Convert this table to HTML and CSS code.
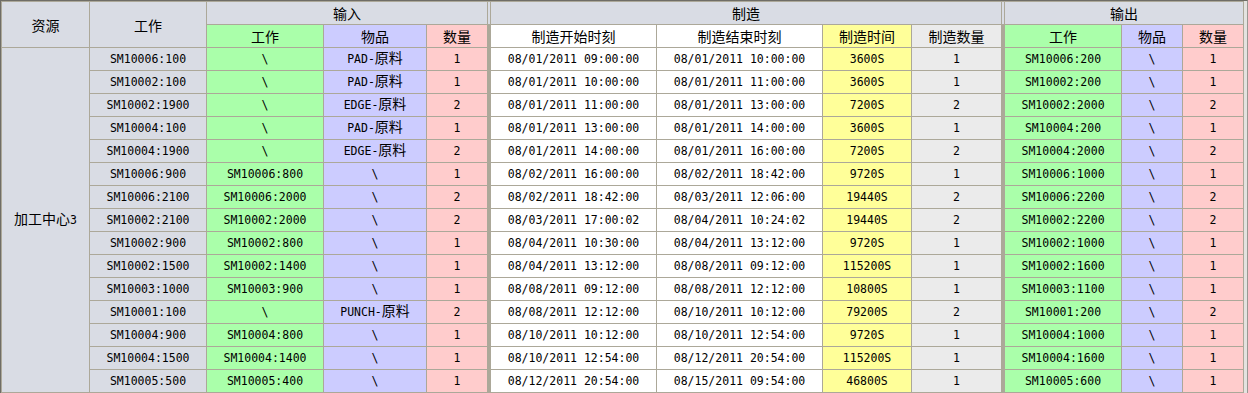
FILE: index.html
```html
<!DOCTYPE html>
<html lang="zh">
<head>
<meta charset="utf-8">
<title>制造计划</title>
<link rel="stylesheet" href="styles.css">
</head>
<body>
<div class="frame">
<table class="grid">
<colgroup>
<col class="w88"><col class="w117"><col class="w117"><col class="w103"><col class="w61"><col class="w3">
<col class="w166"><col class="w166"><col class="w89"><col class="w90"><col class="w3">
<col class="w117"><col class="w61"><col class="w61">
</colgroup>
<tbody>
<tr>
<th rowspan="2">资源</th><th rowspan="2">工作</th><th colspan="3">输入</th><th class="sp-top"></th><th colspan="4">制造</th><th class="sp-top"></th><th colspan="3">输出</th>
</tr>
<tr>
<th class="g">工作</th><th class="p">物品</th><th class="r">数量</th><th class="sp" rowspan="16"></th><th class="w">制造开始时刻</th><th class="w">制造结束时刻</th><th class="y">制造时间</th><th class="l">制造数量</th><th class="sp" rowspan="16"></th><th class="g">工作</th><th class="p">物品</th><th class="r">数量</th>
</tr>
<tr><td class="res" rowspan="15"><span class="c">加工中心</span>3</td><td class="hd">SM10006:100</td><td class="g">\</td><td class="p">PAD-<span class="c">原料</span></td><td class="r">1</td><td class="w">08/01/2011 09:00:00</td><td class="w">08/01/2011 10:00:00</td><td class="y">3600S</td><td class="l">1</td><td class="g">SM10006:200</td><td class="p">\</td><td class="r">1</td></tr>
<tr><td class="hd">SM10002:100</td><td class="g">\</td><td class="p">PAD-<span class="c">原料</span></td><td class="r">1</td><td class="w">08/01/2011 10:00:00</td><td class="w">08/01/2011 11:00:00</td><td class="y">3600S</td><td class="l">1</td><td class="g">SM10002:200</td><td class="p">\</td><td class="r">1</td></tr>
<tr><td class="hd">SM10002:1900</td><td class="g">\</td><td class="p">EDGE-<span class="c">原料</span></td><td class="r">2</td><td class="w">08/01/2011 11:00:00</td><td class="w">08/01/2011 13:00:00</td><td class="y">7200S</td><td class="l">2</td><td class="g">SM10002:2000</td><td class="p">\</td><td class="r">2</td></tr>
<tr><td class="hd">SM10004:100</td><td class="g">\</td><td class="p">PAD-<span class="c">原料</span></td><td class="r">1</td><td class="w">08/01/2011 13:00:00</td><td class="w">08/01/2011 14:00:00</td><td class="y">3600S</td><td class="l">1</td><td class="g">SM10004:200</td><td class="p">\</td><td class="r">1</td></tr>
<tr><td class="hd">SM10004:1900</td><td class="g">\</td><td class="p">EDGE-<span class="c">原料</span></td><td class="r">2</td><td class="w">08/01/2011 14:00:00</td><td class="w">08/01/2011 16:00:00</td><td class="y">7200S</td><td class="l">2</td><td class="g">SM10004:2000</td><td class="p">\</td><td class="r">2</td></tr>
<tr><td class="hd">SM10006:900</td><td class="g">SM10006:800</td><td class="p">\</td><td class="r">1</td><td class="w">08/02/2011 16:00:00</td><td class="w">08/02/2011 18:42:00</td><td class="y">9720S</td><td class="l">1</td><td class="g">SM10006:1000</td><td class="p">\</td><td class="r">1</td></tr>
<tr><td class="hd">SM10006:2100</td><td class="g">SM10006:2000</td><td class="p">\</td><td class="r">2</td><td class="w">08/02/2011 18:42:00</td><td class="w">08/03/2011 12:06:00</td><td class="y">19440S</td><td class="l">2</td><td class="g">SM10006:2200</td><td class="p">\</td><td class="r">2</td></tr>
<tr><td class="hd">SM10002:2100</td><td class="g">SM10002:2000</td><td class="p">\</td><td class="r">2</td><td class="w">08/03/2011 17:00:02</td><td class="w">08/04/2011 10:24:02</td><td class="y">19440S</td><td class="l">2</td><td class="g">SM10002:2200</td><td class="p">\</td><td class="r">2</td></tr>
<tr><td class="hd">SM10002:900</td><td class="g">SM10002:800</td><td class="p">\</td><td class="r">1</td><td class="w">08/04/2011 10:30:00</td><td class="w">08/04/2011 13:12:00</td><td class="y">9720S</td><td class="l">1</td><td class="g">SM10002:1000</td><td class="p">\</td><td class="r">1</td></tr>
<tr><td class="hd">SM10002:1500</td><td class="g">SM10002:1400</td><td class="p">\</td><td class="r">1</td><td class="w">08/04/2011 13:12:00</td><td class="w">08/08/2011 09:12:00</td><td class="y">115200S</td><td class="l">1</td><td class="g">SM10002:1600</td><td class="p">\</td><td class="r">1</td></tr>
<tr><td class="hd">SM10003:1000</td><td class="g">SM10003:900</td><td class="p">\</td><td class="r">1</td><td class="w">08/08/2011 09:12:00</td><td class="w">08/08/2011 12:12:00</td><td class="y">10800S</td><td class="l">1</td><td class="g">SM10003:1100</td><td class="p">\</td><td class="r">1</td></tr>
<tr><td class="hd">SM10001:100</td><td class="g">\</td><td class="p">PUNCH-<span class="c">原料</span></td><td class="r">2</td><td class="w">08/08/2011 12:12:00</td><td class="w">08/10/2011 10:12:00</td><td class="y">79200S</td><td class="l">2</td><td class="g">SM10001:200</td><td class="p">\</td><td class="r">2</td></tr>
<tr><td class="hd">SM10004:900</td><td class="g">SM10004:800</td><td class="p">\</td><td class="r">1</td><td class="w">08/10/2011 10:12:00</td><td class="w">08/10/2011 12:54:00</td><td class="y">9720S</td><td class="l">1</td><td class="g">SM10004:1000</td><td class="p">\</td><td class="r">1</td></tr>
<tr><td class="hd">SM10004:1500</td><td class="g">SM10004:1400</td><td class="p">\</td><td class="r">1</td><td class="w">08/10/2011 12:54:00</td><td class="w">08/12/2011 20:54:00</td><td class="y">115200S</td><td class="l">1</td><td class="g">SM10004:1600</td><td class="p">\</td><td class="r">1</td></tr>
<tr><td class="hd">SM10005:500</td><td class="g">SM10005:400</td><td class="p">\</td><td class="r">1</td><td class="w">08/12/2011 20:54:00</td><td class="w">08/15/2011 09:54:00</td><td class="y">46800S</td><td class="l">1</td><td class="g">SM10005:600</td><td class="p">\</td><td class="r">1</td></tr>
</tbody>
</table>
</div>
</body>
</html>
```
FILE: styles.css
```css
html, body {
  margin: 0;
  padding: 0;
}
body {
  width: 1248px;
  height: 393px;
  overflow: hidden;
  background: #e4e3e0;
}
.frame {
  width: 1248px;
  height: 393px;
  box-sizing: border-box;
  border-left: 1px solid #6f6d66;
  border-top: 1px solid #6f6d66;
  border-right: 1px solid #9a9893;
  background: #e4e3e0;
}
.grid {
  border-collapse: collapse;
  table-layout: fixed;
  width: 1243px;
  font-family: "DejaVu Sans Mono", "Noto Sans CJK SC", monospace;
  font-size: 11.5px;
  color: #000;
}
.w88 { width: 88px; }
.w117 { width: 117px; }
.w103 { width: 103px; }
.w61 { width: 61px; }
.w3 { width: 3px; }
.w166 { width: 166px; }
.w89 { width: 89px; }
.w90 { width: 90px; }
.grid th,
.grid td {
  border: 1px solid #aca899;
  padding: 0;
  height: 22px;
  line-height: 22px;
  text-align: center;
  white-space: nowrap;
  overflow: hidden;
  font-weight: normal;
  background: #d9dce4;
}
.grid th {
  font-family: "Noto Sans CJK SC", sans-serif;
  font-size: 14px;
}
.c {
  font-family: "Noto Sans CJK SC", sans-serif;
  font-size: 14px;
  line-height: 1px;
}
.grid .g { background: #aaffaa; }
.grid .p { background: #ccccff; }
.grid .r { background: #ffcccc; }
.grid .w { background: #ffffff; }
.grid .y { background: #ffff99; }
.grid .l { background: #ebebeb; }
.grid .sp { background: #aca899; }
.grid .hd,
.grid .res { background: #d9dce4; }
```
